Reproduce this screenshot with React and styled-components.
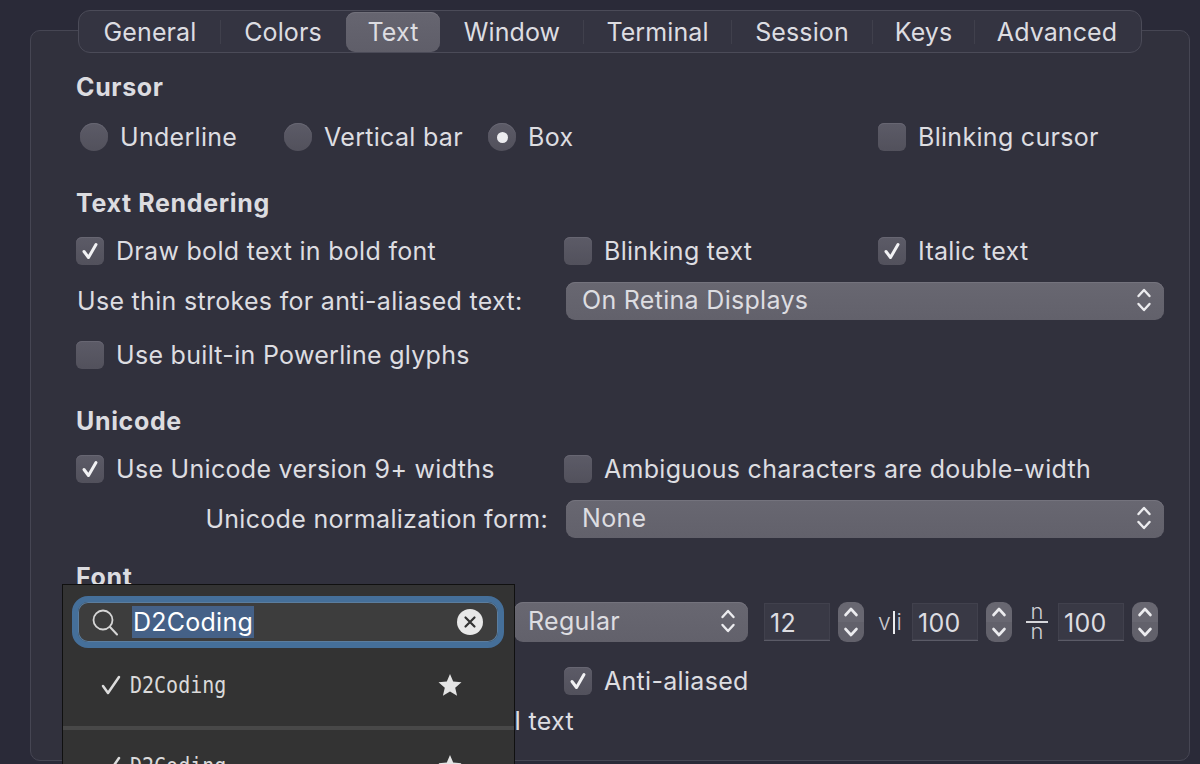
import React from 'react'
import styled, { createGlobalStyle } from 'styled-components'

const Global = createGlobalStyle`
  html, body { margin: 0; padding: 0; background: #2a2a38; }
  * { box-sizing: border-box; }
`

const Page = styled.div`
  position: relative;
  width: 1200px;
  height: 764px;
  overflow: hidden;
  padding: 30px 10px 0 30px;
  background: #2a2a38;
  font-family: Inter, "Liberation Sans", sans-serif;
  font-size: 25px;
  letter-spacing: 0.3px;
  color: #dddde1;
`
const Panel = styled.div`
  height: 731px;
  padding: 41px 25px 0 46px;
  background: #31313d;
  border: 1px solid #464653;
  border-radius: 10px;
`
const TabBar = styled.div`
  position: absolute;
  left: 78px;
  top: 10px;
  width: 1064px;
  height: 43px;
  display: flex;
  align-items: center;
  padding-left: 1px;
  letter-spacing: 0.1px;
  background: #343441;
  border: 1px solid #4b4b58;
  border-radius: 12px;
`
const Tab = styled.div`
  width: ${p => p.$w}px;
  height: 40px;
  display: flex;
  align-items: center;
  justify-content: center;
  border-radius: 9px;
  background: ${p => (p.$active ? 'linear-gradient(#666570, #5f5e69)' : 'transparent')};
  box-shadow: ${p => (p.$active ? 'inset 0 1px 0 #72717b' : 'none')};
`
const TabDivider = styled.div`
  width: 1px;
  height: 24px;
  background: ${p => (p.$hidden ? 'transparent' : '#40404c')};
`
const Heading = styled.div`
  height: 30px;
  margin-top: ${p => p.$mt || 0}px;
  margin-left: -1px;
  line-height: 30px;
  font-weight: 700;
  letter-spacing: 0.65px;
  color: #dcdce0;
`
const Row = styled.div`
  height: 40px;
  margin-top: ${p => p.$mt || 0}px;
  margin-left: -1px;
  display: grid;
  grid-template-columns: 488px 314px 1fr;
  align-items: center;
`
const CursorRow = styled(Row)`
  grid-template-columns: 204px 204px 390px 1fr;
  padding-left: 4px;
`
const Option = styled.div`
  display: flex;
  align-items: center;
  gap: ${p => p.$gap || 12}px;
  white-space: nowrap;
`
const Radio = styled.div`
  width: 28px;
  height: 28px;
  flex: none;
  display: flex;
  align-items: center;
  justify-content: center;
  border-radius: 50%;
  background: linear-gradient(#5c5b67, #52515c);
  box-shadow: inset 0 1px 0 #676672;
  &::after {
    content: '';
    display: ${p => (p.$on ? 'block' : 'none')};
    width: 11px;
    height: 11px;
    border-radius: 50%;
    background: #ececef;
  }
`
const Box = styled.div`
  width: 28px;
  height: 28px;
  flex: none;
  display: flex;
  align-items: center;
  justify-content: center;
  border-radius: 6px;
  background: linear-gradient(#5c5b67, #52515c);
  box-shadow: inset 0 1px 0 #676672;
`
const FieldRow = styled.div`
  height: 38px;
  margin-top: ${p => p.$mt || 0}px;
  display: grid;
  grid-template-columns: 489px 598px;
  align-items: center;
`
const FieldLabel = styled.div`
  padding: ${p => (p.$right ? '0 18px 0 0' : '0')};
  text-align: ${p => (p.$right ? 'right' : 'left')};
  white-space: nowrap;
`
const Select = styled.div`
  height: ${p => p.$h || 38}px;
  width: ${p => (p.$w ? `${p.$w}px` : 'auto')};
  flex: none;
  display: flex;
  align-items: center;
  justify-content: space-between;
  padding: 0 11px 2px ${p => p.$pad || 16}px;
  border-radius: 9px;
  background: linear-gradient(#686771, #62616b);
  box-shadow: inset 0 1px 0 #74737d;
`
const FontRow = styled(Row)`
  display: flex;
  padding-left: 438px;
`
const Field = styled.div`
  width: 66px;
  height: 38px;
  flex: none;
  margin-left: ${p => p.$ml}px;
  padding-left: 6px;
  line-height: 40px;
  background: #393945;
  box-shadow: inset 0 0 0 1px #41414d;
  border-bottom: 1px solid #5b5b67;
`
const Stepper = styled.div`
  width: 26px;
  height: 40px;
  flex: none;
  margin-left: 8px;
  display: grid;
  grid-template-rows: 1fr 1fr;
  justify-items: center;
  align-items: center;
  border-radius: 9px;
  background: linear-gradient(#686771 49%, #4b4a55 49%, #4b4a55 51%, #62616b 51%);
`
const LineSpacingGlyph = styled.div`
  flex: none;
  width: 24px;
  margin-left: 14px;
  display: flex;
  align-items: center;
  justify-content: space-between;
  font-size: 23px;
  font-weight: 300;
  letter-spacing: 0;
  color: #c9c9cf;
`
const GlyphBar = styled.div`
  width: 2px;
  height: 23px;
  background: #ecedf0;
`
const FractionGlyph = styled.div`
  flex: none;
  width: 22px;
  margin-left: 14px;
  display: flex;
  flex-direction: column;
  align-items: center;
  gap: 1px;
  font-size: 22px;
  font-weight: 300;
  letter-spacing: 0;
  color: #d0d0d5;
`
const FractionPart = styled.div`
  height: 16px;
  line-height: 14px;
`
const FractionBar = styled.div`
  width: 22px;
  height: 2px;
  background: #d6d6da;
`
const DifferentFont = styled.div`
  width: 498px;
  text-align: right;
  white-space: nowrap;
`
const Popup = styled.div`
  position: absolute;
  left: 62px;
  top: 584px;
  width: 453px;
  height: 190px;
  padding: 11px 10px 0 9px;
  background: #333333;
  border: 1px solid #101010;
  border-bottom: 0;
`
const SearchRing = styled.div`
  height: 52px;
  padding: 0 15px 0 14px;
  display: flex;
  align-items: center;
  background: #3d3d3d;
  border: 6px solid #456f99;
  border-radius: 16px;
  box-shadow: inset 0 0 0 1px #5b7d9e;
`
const SearchText = styled.span`
  margin-left: 14px;
  height: 32px;
  padding: 0 1px;
  line-height: 32px;
  font-size: 25px;
  letter-spacing: 0.25px;
  color: #ffffff;
  background: #456187;
`
const ClearButton = styled.div`
  width: 26px;
  height: 26px;
  margin-left: auto;
  display: flex;
  align-items: center;
  justify-content: center;
  border-radius: 50%;
  background: #e8e8e8;
`
const FontItem = styled.div`
  height: ${p => p.$h}px;
  display: flex;
  align-items: center;
  margin: 0 -10px 0 -9px;
  padding: 0 52px 4px 38px;
`
const ItemName = styled.span`
  display: inline-block;
  margin-left: 9px;
  font-family: "DejaVu Sans Mono", "Liberation Mono", monospace;
  font-size: 20px;
  letter-spacing: 0;
  color: #dadada;
  transform: scaleY(1.16);
`
const Separator = styled.div`
  height: 4px;
  margin: 0 -10px 0 -9px;
  background: #484848;
`
const StarSlot = styled.div`
  margin-left: auto;
  display: flex;
`

const Check = () => (
  <svg width="18" height="20" viewBox="0 0 18 20" fill="none">
    <path d="M3 10.5 L7.5 16.5 L15 3.5" stroke="#f2f2f4" strokeWidth="3" strokeLinecap="round" strokeLinejoin="round" />
  </svg>
)

const UpDown = () => (
  <svg width="18" height="26" viewBox="0 0 18 26" fill="none">
    <path d="M3.5 9 L9 3 L14.5 9 M3.5 17 L9 23 L14.5 17" stroke="#ececef" strokeWidth="2.4" strokeLinecap="round" strokeLinejoin="round" />
  </svg>
)

const Chevron = ({ down }) => (
  <svg width="16" height="12" viewBox="0 0 16 12" fill="none">
    <path d={down ? 'M2.5 3 L8 9 L13.5 3' : 'M2.5 9 L8 3 L13.5 9'} stroke="#ececef" strokeWidth="2.6" strokeLinecap="round" strokeLinejoin="round" />
  </svg>
)

const Star = () => (
  <svg width="24" height="24" viewBox="0 0 24 24">
    <path d="M12 1 L15.2 8.6 L23.5 9.3 L17.2 14.7 L19.1 22.8 L12 18.5 L4.9 22.8 L6.8 14.7 L0.5 9.3 L8.8 8.6 Z" fill="#e4e4e4" />
  </svg>
)

const Tick = () => (
  <svg width="20" height="20" viewBox="0 0 20 20" fill="none">
    <path d="M2 11 L7 18 L18 2" stroke="#dcdcdc" strokeWidth="2.5" strokeLinecap="round" strokeLinejoin="round" />
  </svg>
)

const tabs = [
  ['General', 140],
  ['Colors', 124],
  ['Text', 94, true],
  ['Window', 142],
  ['Terminal', 147],
  ['Session', 140],
  ['Keys', 101],
  ['Advanced', 164],
]

const Checkbox = ({ on, children }) => (
  <Option>
    <Box>{on && <Check />}</Box>
    <span>{children}</span>
  </Option>
)

const RadioOption = ({ on, children }) => (
  <Option $gap={12}>
    <Radio $on={on} />
    <span>{children}</span>
  </Option>
)

const App = () => (
  <Page>
    <Global />
    <Panel>
      <Heading>Cursor</Heading>
      <CursorRow $mt={15}>
        <RadioOption>Underline</RadioOption>
        <RadioOption>Vertical bar</RadioOption>
        <RadioOption on>Box</RadioOption>
        <Checkbox>Blinking cursor</Checkbox>
      </CursorRow>

      <Heading $mt={31}>Text Rendering</Heading>
      <Row $mt={13}>
        <Checkbox on>Draw bold text in bold font</Checkbox>
        <Checkbox>Blinking text</Checkbox>
        <Checkbox on>Italic text</Checkbox>
      </Row>
      <FieldRow $mt={11}>
        <FieldLabel>Use thin strokes for anti-aliased text:</FieldLabel>
        <Select>On Retina Displays<UpDown /></Select>
      </FieldRow>
      <Row $mt={15}>
        <Checkbox>Use built-in Powerline glyphs</Checkbox>
      </Row>

      <Heading $mt={31}>Unicode</Heading>
      <Row $mt={13}>
        <Checkbox on>Use Unicode version 9+ widths</Checkbox>
        <Checkbox>Ambiguous characters are double-width</Checkbox>
      </Row>
      <FieldRow $mt={11}>
        <FieldLabel $right>Unicode normalization form:</FieldLabel>
        <Select>None<UpDown /></Select>
      </FieldRow>

      <Heading $mt={24}>Font</Heading>
      <FontRow $mt={10}>
        <Select $w={234} $h={40} $pad={14}>Regular<UpDown /></Select>
        <Field $ml={16}>12</Field>
        <Stepper><Chevron /><Chevron down /></Stepper>
        <LineSpacingGlyph><span>v</span><GlyphBar /><span>i</span></LineSpacingGlyph>
        <Field $ml={10}>100</Field>
        <Stepper><Chevron /><Chevron down /></Stepper>
        <FractionGlyph>
          <FractionPart>n</FractionPart>
          <FractionBar />
          <FractionPart>n</FractionPart>
        </FractionGlyph>
        <Field $ml={10}>100</Field>
        <Stepper><Chevron /><Chevron down /></Stepper>
      </FontRow>
      <Row $mt={19}>
        <span />
        <Checkbox on>Anti-aliased</Checkbox>
      </Row>
      <Row>
        <DifferentFont>Use a different font for non-ASCII text</DifferentFont>
      </Row>
    </Panel>

    <TabBar>
      {tabs.map(([name, w, active], i) => (
        <React.Fragment key={name}>
          <Tab $w={w} $active={active}>{name}</Tab>
          {i < tabs.length - 1 && <TabDivider $hidden={i === 1 || i === 2} />}
        </React.Fragment>
      ))}
    </TabBar>

    <Popup>
      <SearchRing>
        <svg width="26" height="28" viewBox="0 0 26 28" fill="none">
          <circle cx="11" cy="12" r="9.5" stroke="#d6d6d6" strokeWidth="1.8" />
          <path d="M18 19 L25 26.5" stroke="#d6d6d6" strokeWidth="2" strokeLinecap="round" />
        </svg>
        <SearchText>D2Coding</SearchText>
        <ClearButton>
          <svg width="14" height="14" viewBox="0 0 14 14" fill="none">
            <path d="M2.5 2.5 L11.5 11.5 M11.5 2.5 L2.5 11.5" stroke="#333" strokeWidth="2.2" strokeLinecap="round" />
          </svg>
        </ClearButton>
      </SearchRing>
      <FontItem $h={78}>
        <Tick /><ItemName>D2Coding</ItemName>
        <StarSlot><Star /></StarSlot>
      </FontItem>
      <Separator />
      <FontItem $h={76}>
        <Tick /><ItemName>D2Coding</ItemName>
        <StarSlot><Star /></StarSlot>
      </FontItem>
    </Popup>
  </Page>
)

export default App
